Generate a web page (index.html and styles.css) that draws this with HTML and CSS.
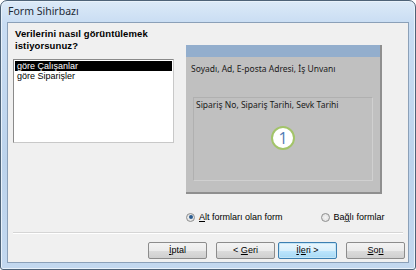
FILE: index.html
```html
<!DOCTYPE html>
<html>
<head>
<meta charset="utf-8">
<link rel="stylesheet" href="styles.css">
</head>
<body>
<div class="window">
  <div class="titlebar">Form Sihirbazı</div>
  <div class="client">
    <div class="main">
      <div class="left">
        <div class="question">Verilerini nasıl görüntülemek<br>istiyorsunuz?</div>
        <div class="listbox">
          <div class="item selected">göre Çalışanlar</div>
          <div class="item">göre Siparişler</div>
        </div>
      </div>
      <div class="right">
        <div class="panel">
          <div class="strip"></div>
          <div class="fields">Soyadı, Ad, E-posta Adresi, İş Unvanı</div>
          <div class="subform">
            <div class="subfields">Sipariş No, Sipariş Tarihi, Sevk Tarihi</div>
            <div class="callout">1</div>
          </div>
        </div>
        <div class="radios">
          <label class="radio"><span class="dot on"></span><span><u>A</u>lt formları olan form</span></label>
          <label class="radio"><span class="dot"></span><span>Ba<u>ğ</u>lı formlar</span></label>
        </div>
      </div>
    </div>
    <div class="sep"></div>
    <div class="buttons">
      <div class="btn"><u>İ</u>ptal</div>
      <div class="pair">
        <div class="btn">&lt; <u>G</u>eri</div>
        <div class="btn focus"><u>İ</u>l<u>e</u>ri &gt;</div>
      </div>
      <div class="btn"><u>S</u>o<u>n</u></div>
    </div>
  </div>
</div>
</body>
</html>
```

FILE: styles.css
```css
* { box-sizing: border-box; }
html, body { margin: 0; padding: 0; background: #ffffff; }
body { width: 416px; height: 270px; overflow: hidden; }

.window {
  width: 416px;
  height: 270px;
  border: 1px solid #4e6378;
  border-radius: 7px 7px 3px 3px;
  background: linear-gradient(180deg, #dceaf8 0px, #c9ddf3 22px, #bcd3ec 60%, #c3d8ef 100%);
  padding: 0 6px 6px 6px;
  display: flex;
  flex-direction: column;
  box-shadow: inset 0 0 0 1px #e9f2fb;
}

.titlebar {
  height: 21px;
  font-family: "Noto Sans", "Open Sans", sans-serif;
  font-size: 10.5px;
  color: #1e2a36;
  line-height: 20px;
  padding-left: 1px;
  flex: none;
}

.client {
  flex: 1;
  background: #f0f0f0;
  border: 1px solid #8ba0b8;
  display: flex;
  flex-direction: column;
  font-family: "Liberation Sans", Arial, sans-serif;
}

.main {
  display: flex;
  padding: 4px 0 0 5px;
  height: 209px;
}

.left {
  width: 161px;
  flex: none;
}

.question {
  font-weight: bold;
  font-size: 9.5px;
  line-height: 12px;
  color: #000;
  padding: 1px 0 0 2px;
  letter-spacing: 0.1px;
}

.listbox {
  margin-top: 7px;
  height: 84px;
  background: #fff;
  border: 1px solid #8a8a8a;
  border-right-color: #c8c8c8;
  border-bottom-color: #c8c8c8;
  padding: 1px;
}

.item {
  font-size: 9px;
  line-height: 10px;
  height: 10px;
  padding-left: 2px;
  color: #000;
  white-space: nowrap;
}
.item.selected { background: #000; color: #fff; }

.right {
  margin-left: 12px;
  width: 218px;
  display: flex;
  flex-direction: column;
}

.panel {
  margin-top: 18px;
  width: 196px;
  height: 149px;
  background: #c0c0c0;
  border-right: 2px solid #8f8f8f;
  border-bottom: 2px solid #8f8f8f;
  display: flex;
  flex-direction: column;
  font-family: "Noto Sans", "Open Sans", sans-serif;
  color: #1a1a1a;
}

.strip {
  height: 12px;
  background: #93aecd;
  flex: none;
}

.fields {
  font-size: 8.5px;
  line-height: 10px;
  padding: 7px 0 0 5px;
  white-space: nowrap;
}

.subform {
  margin: 23px 7px 0 7px;
  height: 84px;
  border: 1px solid #b0b0b0;
  border-right-color: #d0d0d0;
  border-bottom-color: #d0d0d0;
  display: flex;
  flex-direction: column;
  align-items: center;
}

.subfields {
  align-self: flex-start;
  font-size: 8.5px;
  line-height: 10px;
  padding: 2px 0 0 2px;
  white-space: nowrap;
}

.callout {
  margin-top: 16px;
  width: 24px;
  height: 24px;
  border-radius: 50%;
  background: #fff;
  border: 2px solid #a3c46a;
  color: #4f7cb5;
  font-family: "Open Sans", "Noto Sans", sans-serif;
  font-size: 16px;
  line-height: 20px;
  text-align: center;
}

.radios {
  margin-top: 18px;
  display: flex;
  gap: 38px;
}

.radio {
  display: flex;
  align-items: center;
  gap: 4px;
  font-size: 9px;
  color: #000;
  white-space: nowrap;
}

.dot {
  width: 9px;
  height: 9px;
  border-radius: 50%;
  border: 1px solid #8e8f8f;
  background: radial-gradient(circle, #f4f4f4 0, #dcdcdc 100%);
  display: flex;
  align-items: center;
  justify-content: center;
}
.dot.on::after {
  content: "";
  width: 4px;
  height: 4px;
  border-radius: 50%;
  background: #2a5b8f;
}

.sep {
  margin: 0 5px;
  height: 2px;
  border-top: 1px solid #d5d5d5;
  border-bottom: 1px solid #ffffff;
}

.buttons {
  display: flex;
  justify-content: flex-end;
  align-items: center;
  gap: 9px;
  padding: 8px 3px 0 0;
}

.pair {
  display: flex;
  gap: 3px;
}

.btn {
  width: 59px;
  height: 17px;
  border: 1px solid #8c8c8c;
  border-radius: 2px;
  background: linear-gradient(180deg, #f3f3f3 0%, #ebebeb 50%, #dcdcdc 51%, #cfcfcf 100%);
  font-size: 9px;
  line-height: 15px;
  text-align: center;
  color: #000;
}
.btn.focus {
  border-color: #3c7fb1;
  background: linear-gradient(180deg, #eaf6fd 0%, #d9f0fc 50%, #bee6fd 51%, #a7d9f5 100%);
  box-shadow: inset 0 0 0 1px #c4e5f6;
}
```
